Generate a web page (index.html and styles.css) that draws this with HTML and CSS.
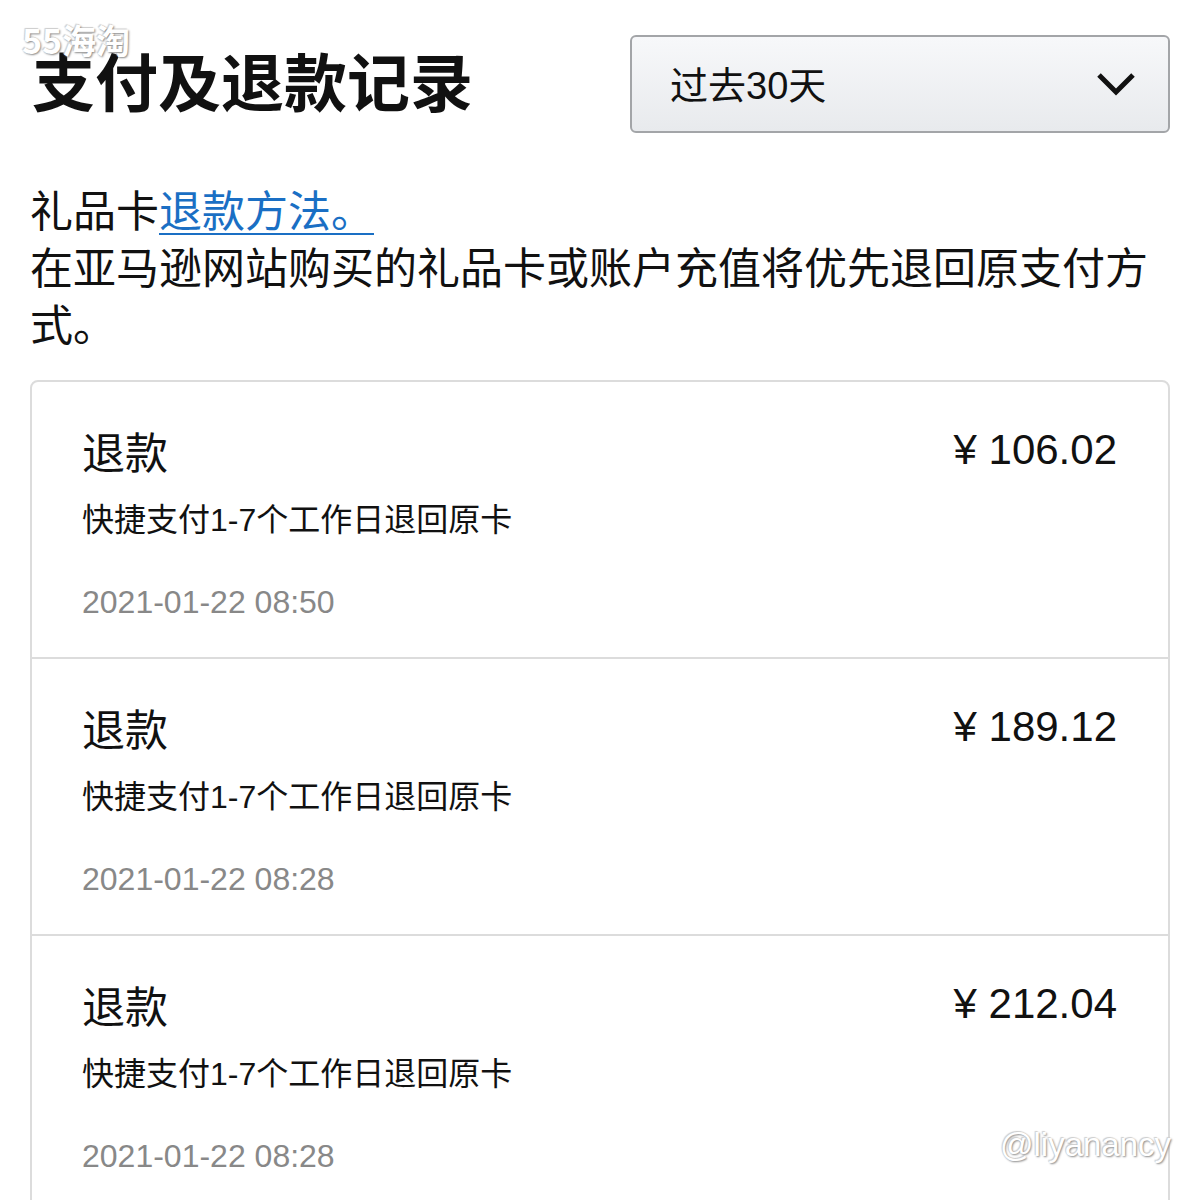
FILE: index.html
```html
<!DOCTYPE html>
<html lang="zh-CN">
<head>
  <meta charset="UTF-8" />
  <meta name="viewport" content="width=device-width, initial-scale=1.0"/>
  <title>支付及退款记录</title>
  <link rel="stylesheet" href="styles.css">
</head>
<body>
  <div class="page">
    <div class="header">
      <h1 class="title">支付及退款记录</h1>
      <div class="range-select">
        <span>过去30天</span>
        <svg class="chevron" width="40" height="26" viewBox="0 0 40 26">
          <polyline points="3,4 20,21 37,4" fill="none" stroke="#111" stroke-width="5" stroke-linejoin="miter"/>
        </svg>
      </div>
    </div>

    <p class="notice">礼品卡<a href="#">退款方法。</a><br>在亚马逊网站购买的礼品卡或账户充值将优先退回原支付方式。</p>

    <div class="record-list">
      <div class="record">
        <div class="record-top">
          <div class="record-type">退款</div>
          <div class="record-amount">¥ 106.02</div>
        </div>
        <div class="record-desc">快捷支付1-7个工作日退回原卡</div>
        <div class="record-date">2021-01-22 08:50</div>
      </div>
      <div class="record">
        <div class="record-top">
          <div class="record-type">退款</div>
          <div class="record-amount">¥ 189.12</div>
        </div>
        <div class="record-desc">快捷支付1-7个工作日退回原卡</div>
        <div class="record-date">2021-01-22 08:28</div>
      </div>
      <div class="record">
        <div class="record-top">
          <div class="record-type">退款</div>
          <div class="record-amount">¥ 212.04</div>
        </div>
        <div class="record-desc">快捷支付1-7个工作日退回原卡</div>
        <div class="record-date">2021-01-22 08:28</div>
      </div>
    </div>
  </div>

  <div class="mark mark-top">55海淘</div>
  <div class="mark mark-bottom">@liyanancy</div>
</body>
</html>
```

FILE: styles.css
```css
body {
  font-family: 'Liberation Sans', 'Noto Sans CJK SC', sans-serif;
  margin: 0;
  padding: 0;
  background: #fff;
  color: #111;
  height: 1200px;
  overflow: hidden;
}

.page {
  padding: 35px 30px 0 30px;
}

.header {
  display: flex;
  justify-content: space-between;
  align-items: center;
}

.title {
  margin: 0 0 12px 0;
  padding-left: 2px;
  font-family: 'Noto Sans CJK SC', sans-serif;
  font-size: 63px;
  font-weight: bold;
  line-height: 1;
  color: #111;
}

.range-select {
  box-sizing: border-box;
  width: 540px;
  height: 98px;
  border: 2px solid #a3a5a8;
  border-radius: 6px;
  background: linear-gradient(#f7f8fa, #e8eaed);
  display: flex;
  align-items: center;
  justify-content: space-between;
  padding: 0 32px 0 38px;
  font-size: 38px;
  color: #111;
}

.range-select span {
  padding-bottom: 4px;
}

.notice {
  margin: 47px 0 0 0;
  font-family: 'Noto Sans CJK SC', sans-serif;
  font-size: 43px;
  line-height: 57px;
  color: #111;
}

.notice a {
  color: #1a6fc4;
  text-decoration: underline;
  text-decoration-thickness: 2px;
  text-underline-offset: 6px;
}

.record-list {
  margin-top: 29px;
  border: 2px solid #dcdcdc;
  border-radius: 8px;
}

.record {
  padding: 43px 51px 35px 50px;
  border-bottom: 2px solid #dcdcdc;
}

.record:last-child {
  border-bottom: none;
}

.record-top {
  display: flex;
  justify-content: space-between;
  align-items: center;
  height: 50px;
}

.record-type {
  font-family: 'Noto Sans CJK SC', sans-serif;
  font-size: 43px;
  line-height: 50px;
}

.record-amount {
  font-size: 42px;
  line-height: 50px;
}

.record-desc {
  margin-top: 25px;
  font-size: 32px;
  line-height: 40px;
}

.record-date {
  margin-top: 42px;
  font-size: 32px;
  line-height: 40px;
  color: #888;
}

/* watermarks over the screenshot */
.mark {
  position: absolute;
  color: #fff;
  text-shadow: 1px 1px 2px #8a8a8a, -1px -1px 1px #d0d0d0;
}

.mark-top {
  top: 20px;
  left: 22px;
  font-size: 34px;
  font-weight: bold;
  font-family: 'Noto Sans CJK SC', sans-serif;
  line-height: 40px;
}

.mark-bottom {
  top: 1124px;
  left: 1000px;
  font-size: 33px;
  line-height: 42px;
}
```
